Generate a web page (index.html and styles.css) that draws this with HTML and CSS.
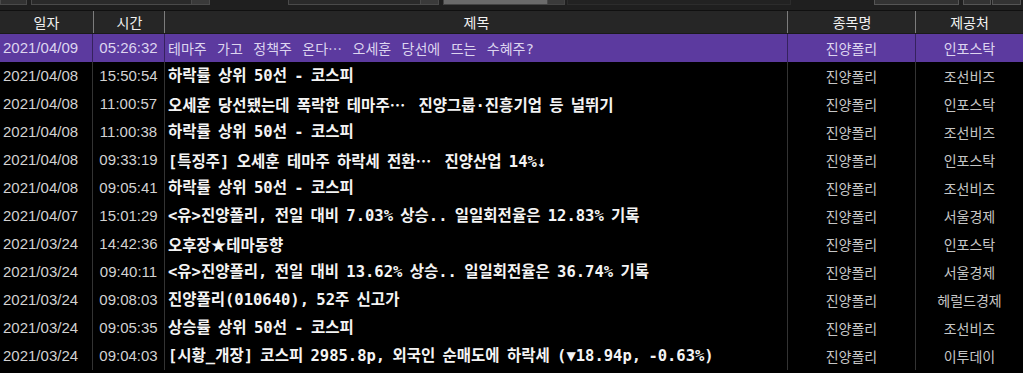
FILE: index.html
```html
<!DOCTYPE html>
<html lang="ko">
<head>
<meta charset="utf-8">
<title>뉴스</title>
<link rel="stylesheet" href="styles.css">
</head>
<body>
<div class="app">
  <div class="toolbar">
    <div class="tb tb-a"></div>
    <div class="tb tb-combo tb-b"><span class="tb-btn"></span></div>
    <div class="tb-gap1"></div>
    <div class="tb tb-combo tb-c"><span class="tb-btn"></span></div>
    <div class="tb tb-light tb-d"><span class="tb-btn"></span></div>
    <div class="tb tb-dark tb-e"></div>
    <div class="tb-gap2"></div>
    <div class="tb tb-f"></div>
    <div class="tb tb-g"></div>
    <div class="tb tb-h"></div>
  </div>
  <div class="grid">
    <div class="row head">
      <div class="c c-date">일자</div>
      <div class="c c-time">시간</div>
      <div class="c c-title">제목</div>
      <div class="c c-stock">종목명</div>
      <div class="c c-src">제공처</div>
    </div>
    <div class="row sel">
      <div class="c c-date">2021/04/09</div>
      <div class="c c-time">05:26:32</div>
      <div class="c c-title">테마주 가고 정책주 온다<span class="fw">…</span> 오세훈 당선에 뜨는 수혜주?</div>
      <div class="c c-stock">진양폴리</div>
      <div class="c c-src">인포스탁</div>
    </div>
    <div class="row">
      <div class="c c-date">2021/04/08</div>
      <div class="c c-time">15:50:54</div>
      <div class="c c-title">하락률 상위 50선 - 코스피</div>
      <div class="c c-stock">진양폴리</div>
      <div class="c c-src">조선비즈</div>
    </div>
    <div class="row">
      <div class="c c-date">2021/04/08</div>
      <div class="c c-time">11:00:57</div>
      <div class="c c-title">오세훈 당선됐는데 폭락한 테마주<span class="fw">…</span> 진양그룹·진흥기업 등 널뛰기</div>
      <div class="c c-stock">진양폴리</div>
      <div class="c c-src">인포스탁</div>
    </div>
    <div class="row">
      <div class="c c-date">2021/04/08</div>
      <div class="c c-time">11:00:38</div>
      <div class="c c-title">하락률 상위 50선 - 코스피</div>
      <div class="c c-stock">진양폴리</div>
      <div class="c c-src">조선비즈</div>
    </div>
    <div class="row">
      <div class="c c-date">2021/04/08</div>
      <div class="c c-time">09:33:19</div>
      <div class="c c-title">[특징주] 오세훈 테마주 하락세 전환<span class="fw">…</span> 진양산업 14%↓</div>
      <div class="c c-stock">진양폴리</div>
      <div class="c c-src">인포스탁</div>
    </div>
    <div class="row">
      <div class="c c-date">2021/04/08</div>
      <div class="c c-time">09:05:41</div>
      <div class="c c-title">하락률 상위 50선 - 코스피</div>
      <div class="c c-stock">진양폴리</div>
      <div class="c c-src">조선비즈</div>
    </div>
    <div class="row">
      <div class="c c-date">2021/04/07</div>
      <div class="c c-time">15:01:29</div>
      <div class="c c-title">&lt;유&gt;진양폴리, 전일 대비 7.03% 상승.. 일일회전율은 12.83% 기록</div>
      <div class="c c-stock">진양폴리</div>
      <div class="c c-src">서울경제</div>
    </div>
    <div class="row">
      <div class="c c-date">2021/03/24</div>
      <div class="c c-time">14:42:36</div>
      <div class="c c-title">오후장<span class="star">★</span>테마동향</div>
      <div class="c c-stock">진양폴리</div>
      <div class="c c-src">인포스탁</div>
    </div>
    <div class="row">
      <div class="c c-date">2021/03/24</div>
      <div class="c c-time">09:40:11</div>
      <div class="c c-title">&lt;유&gt;진양폴리, 전일 대비 13.62% 상승.. 일일회전율은 36.74% 기록</div>
      <div class="c c-stock">진양폴리</div>
      <div class="c c-src">서울경제</div>
    </div>
    <div class="row">
      <div class="c c-date">2021/03/24</div>
      <div class="c c-time">09:08:03</div>
      <div class="c c-title">진양폴리(010640), 52주 신고가</div>
      <div class="c c-stock">진양폴리</div>
      <div class="c c-src">헤럴드경제</div>
    </div>
    <div class="row">
      <div class="c c-date">2021/03/24</div>
      <div class="c c-time">09:05:35</div>
      <div class="c c-title">상승률 상위 50선 - 코스피</div>
      <div class="c c-stock">진양폴리</div>
      <div class="c c-src">조선비즈</div>
    </div>
    <div class="row">
      <div class="c c-date">2021/03/24</div>
      <div class="c c-time">09:04:03</div>
      <div class="c c-title">[시황_개장] 코스피 2985.8p, 외국인 순매도에 하락세 (▼18.94p, -0.63%)</div>
      <div class="c c-stock">진양폴리</div>
      <div class="c c-src">이투데이</div>
    </div>
  </div>
</div>
</body>
</html>
```

FILE: styles.css
```css
* { box-sizing: border-box; }
html, body {
  margin: 0;
  padding: 0;
  background: #000;
  overflow: hidden;
}
.app {
  width: 1023px;
  height: 373px;
  overflow: hidden;
  background: #000;
  font-family: "Noto Sans CJK KR", "Noto Sans", sans-serif;
}
.toolbar {
  height: 11px;
  background: #1f1f1f;
  border-bottom: 1px solid #101010;
  display: flex;
  align-items: flex-start;
}
.tb {
  height: 5px;
  border: 1px solid #4a4a4a;
  border-top: none;
  background: #2a2a2a;
  display: flex;
  justify-content: flex-end;
}
.tb-btn {
  width: 18px;
  height: 100%;
  background: #3a3a3a;
  border-left: 1px solid #4a4a4a;
}
.tb-a { width: 27px; background: #333; }
.tb-b { width: 179px; margin-left: 4px; }
.tb-gap1 { width: 78px; }
.tb-c { width: 151px; }
.tb-light { background: #6b6b6b; margin-left: 4px; width: 122px; border-color: #444; }
.tb-light .tb-btn { width: 17px; background: #3a3a3a; }
.tb-dark { width: 224px; margin-left: 2px; background: #222; border-color: #2c2c2c; }
.tb-gap2 { width: 83px; }
.tb-f { width: 85px; background: #333; border-color: #555; }
.tb-g { width: 28px; margin-left: 4px; background: #333; border-color: #555; }
.tb-h { width: 29px; margin-left: 1px; background: #333; border-color: #555; }

.row {
  display: grid;
  grid-template-columns: 93px 72px 623px 128px 107px;
  height: 28px;
  line-height: 28px;
  white-space: nowrap;
}
.c {
  overflow: hidden;
  border-right: 1px solid #333;
}
.c-src { border-right: none; }

.c-date, .c-time {
  font-family: "Liberation Sans", Arial, sans-serif;
  font-size: 15px;
  color: #d2d2d2;
}
.c-date { padding-left: 3px; }
.c-time { text-align: center; }
.c-title {
  padding-left: 3px;
  color: #f4f4f4;
  font-family: "DejaVu Sans Mono", "Noto Sans CJK KR", monospace;
  font-weight: bold;
  font-size: 15.5px;
  word-spacing: -2px;
}
.fw {
  font-family: "Noto Sans CJK KR", sans-serif;
  letter-spacing: 6px;
}
.star {
  font-family: "Noto Sans CJK KR", sans-serif;
}
.c-stock, .c-src {
  text-align: center;
  color: #c6c6c6;
  font-size: 14px;
}

.head {
  line-height: 22px;
  background: #262626;
  border-bottom: 1px solid #1a1a1a;
  height: 23px;
}
.head .c {
  font-family: "Noto Sans CJK KR", sans-serif;
  font-weight: normal;
  font-size: 14px;
  word-spacing: 0;
  color: #f2f2f2;
  text-align: center;
  padding-left: 0;
  border-right: none;
  border-left: 1px solid #7c7c7c;
  margin-left: -1px;
}
.head .c-date { border-left: none; margin-left: 0; }
.head .c-time { margin-left: 0; }

.sel { background: #5c3a9f; }
.sel .c { border-right-color: #35225e; color: #ddd5ef; }
.sel .c-src { border-right: none; }
.sel .c-title { font-weight: normal; font-size: 14px; word-spacing: 2px; }
.sel .fw { letter-spacing: 0; }
```
